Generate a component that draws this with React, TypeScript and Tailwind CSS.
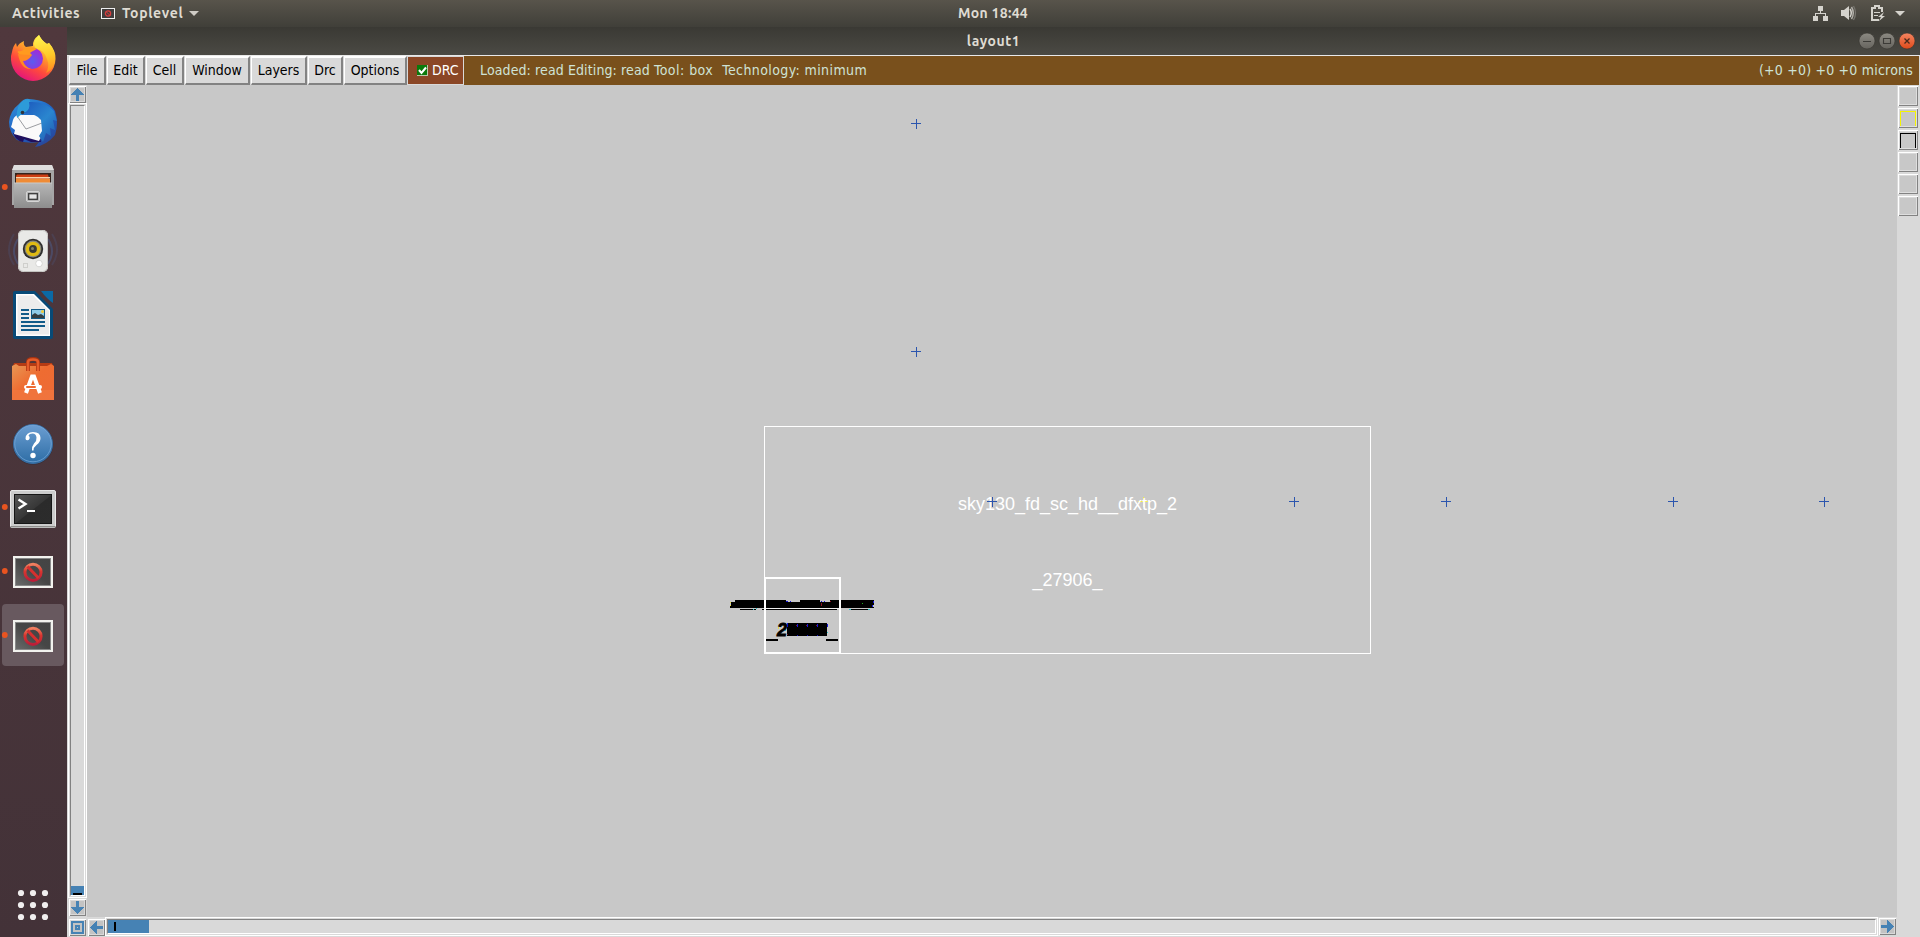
import React from "react";

const menus = [
  { label: "File", box: "w-[37px]" },
  { label: "Edit", box: "w-[38px]" },
  { label: "Cell", box: "w-[38px]" },
  { label: "Window", box: "w-[65px]" },
  { label: "Layers", box: "w-[56px]" },
  { label: "Drc", box: "w-[35px]" },
  { label: "Options", box: "w-[63px]" },
];

const crosses = [
  [916, 123],
  [916, 351],
  [992, 501],
  [1294, 501],
  [1446, 501],
  [1673, 501],
  [1824, 501],
];

function Slot({ children, running = false, active = false }: { children: React.ReactNode; running?: boolean; active?: boolean }) {
  return (
    <svg width="67" height="64" viewBox="0 0 67 64" className="block shrink-0">
      {active && <rect x="2" y="1" width="62" height="62" rx="4" fill="#68595f" />}
      {children}
      {running && <circle cx="4.8" cy="32" r="2.9" fill="#e95420" />}
    </svg>
  );
}

function Firefox() {
  return (
    <Slot>
      <defs>
        <linearGradient id="ffBody" x1="0.8" y1="0.1" x2="0.3" y2="1">
          <stop offset="0" stopColor="#fff44f" />
          <stop offset="0.35" stopColor="#ffa02a" />
          <stop offset="0.65" stopColor="#ff4a3c" />
          <stop offset="1" stopColor="#e3127f" />
        </linearGradient>
        <radialGradient id="ffGlobe" cx="0.5" cy="0.65" r="0.6">
          <stop offset="0" stopColor="#5b5bf0" />
          <stop offset="1" stopColor="#a12bd6" />
        </radialGradient>
        <linearGradient id="ffTail" x1="0.5" y1="0" x2="0.6" y2="1">
          <stop offset="0" stopColor="#fff44f" />
          <stop offset="0.55" stopColor="#ffc928" />
          <stop offset="1" stopColor="#ff8a20" />
        </linearGradient>
      </defs>
      <path d="M12 25 Q13 19 16 16 L17 20 Q19 16 24 14 Q23 18 26 20 L33 19 Q32 13 39 8 Q42 14 47 17 L49 16 Q56 24 55.500 32 A22.500 22.500 0 0 1 33 54 A22.500 22.500 0 0 1 11 33 Q10.500 29 12 25Z" fill="url(#ffBody)" />
      <path d="M39 8 Q41 13 47 17 L49 16 Q56 24 55 34 Q53 43 46 46 Q50 39 47 32 Q44 23 37 22 Q30 17 39 8Z" fill="url(#ffTail)" />
      <circle cx="32.500" cy="31.500" r="10.500" fill="url(#ffGlobe)" />
      <path d="M24 22 Q31 18 37 22 L33 24 Q31 25 30 26 L32 28 Q27 30 26 33 Q23 32 19 27 Q17 25 18 24 Q22 25 24 22Z" fill="#ff9a1f" />
      <path d="M18 27 Q24 28 32 28 Q28 34 23 34 Q25 40 31 42 Q21 43 18 27Z" fill="#ff8a22" />
    </Slot>
  );
}

function Thunderbird() {
  return (
    <Slot>
      <defs>
        <linearGradient id="tbBody" x1="0.2" y1="0" x2="0.8" y2="1">
          <stop offset="0" stopColor="#2f8fd8" />
          <stop offset="0.5" stopColor="#1f5fc4" />
          <stop offset="1" stopColor="#2a4596" />
        </linearGradient>
        <linearGradient id="tbWing" x1="0" y1="0" x2="0.9" y2="1">
          <stop offset="0" stopColor="#1c58bd" />
          <stop offset="0.55" stopColor="#2a86cf" />
          <stop offset="1" stopColor="#1f58b0" />
        </linearGradient>
      </defs>
      <path d="M19 13 Q24 7 29 8 Q49 9 55 20 Q59 32 55 44 Q47 54 35 56 L39 51 Q26 53 17 49 Q9 41 9 31 Q10 20 19 13Z" fill="url(#tbBody)" />
      <path d="M13 42 Q16 50 23 51 L24 48 L31 51 L41 51 L40 47 L24 43Z" fill="#20105e" />
      <path d="M12 33 Q13 25 18 24 L42 24 L42 44 L39 50 L14 43 L15 39 L11 36Z" fill="#fafafa" />
      <path d="M17 25 L26 38 L42 32" fill="none" stroke="#9b9da1" strokeWidth="1" />
      <path d="M29 8 Q22 8 18 16 Q16 22 17 27 Q20 24 24 22 Q30 20 30 14 Q31 10 29 8Z" fill="#2d9bd9" />
      <path d="M29 11 Q46 10 54 20 L57 30 L53 29 L55 39 L50 37 L51 45 L46 42 L43 51 L39 45 L42 40 L41 29 Q37 23 24 22 Q31 19 29 11Z" fill="url(#tbWing)" />
      <circle cx="22.500" cy="21.500" r="1.800" fill="#30333b" />
    </Slot>
  );
}

function Files() {
  return (
    <Slot running>
      <defs>
        <linearGradient id="drawer" x1="0" y1="0" x2="0" y2="1">
          <stop offset="0" stopColor="#b6b6b6" />
          <stop offset="1" stopColor="#8d8d8d" />
        </linearGradient>
      </defs>
      <path d="M14 10 H52 L54 16 V50 H12 V16Z" fill="#a6a6a6" />
      <path d="M14 10 H52 L54 15 H12Z" fill="#dedede" />
      <rect x="15" y="18" width="36" height="10" fill="#35231c" />
      <path d="M17 19.500 H48 L50 27 H16 V21Z" fill="#cf3e12" />
      <rect x="16" y="22" width="34" height="1.500" fill="#f6d3a7" />
      <rect x="16" y="24" width="34" height="4" fill="#ef8b35" />
      <path d="M14 28 H52 V53 H14Z" fill="url(#drawer)" />
      <path d="M14 28 H52" stroke="#cacaca" />
      <rect x="26.500" y="36.500" width="13" height="10" rx="1.500" fill="#b4b4b4" stroke="#d5d5d5" />
      <rect x="28.700" y="38.700" width="8.600" height="5.600" fill="#e6e6e6" stroke="#3b3b3b" strokeWidth="1.300" />
    </Slot>
  );
}

function Speaker() {
  return (
    <Slot>
      <g fill="none" stroke="#4c4a64" strokeWidth="2" transform="translate(0 1)">
        <path d="M14 14 Q4 30 14 45 M52 14 Q62 30 52 45" opacity="0.5" />
        <path d="M18 19 Q10 31 18 44 M48 19 Q56 31 48 44" />
      </g>
      <g transform="translate(0 1)">
        <rect x="18" y="10" width="30" height="42" rx="5" fill="#e9e9e7" />
        <rect x="18.500" y="10.500" width="29" height="41" rx="5" fill="none" stroke="#c3c3c0" />
        <circle cx="33" cy="29" r="10.200" fill="#302f2e" />
        <circle cx="33" cy="29" r="8.400" fill="#87867c" />
        <circle cx="33" cy="29" r="7.300" fill="#dfba13" />
        <circle cx="33" cy="29" r="3.900" fill="#3a3a34" />
        <circle cx="32.500" cy="28.500" r="1.500" fill="#85856a" />
        <circle cx="39" cy="43.500" r="3.300" fill="#fff" stroke="#c9c9c7" strokeWidth="0.700" />
        <rect x="23.500" y="43.500" width="4" height="4" fill="none" stroke="#cfcfcc" />
      </g>
    </Slot>
  );
}

function Writer() {
  return (
    <Slot>
      <path d="M15 8 H35 L53 26 V54 Q53 56 51 56 H15 Q13 56 13 54 V10 Q13 8 15 8Z" fill="#084a77" />
      <path d="M41 8 H53 V20 Q47 16 41 8Z" fill="#0b69a5" />
      <path d="M16 11 H34 L50 27 V53 H16Z" fill="#fff" />
      <path d="M17.500 12.500 H33 L49 28 V51.500 H17.500Z" fill="#ececec" />
      <g fill="#115b89">
        <rect x="21" y="26" width="8" height="2" />
        <rect x="21" y="30" width="8" height="2" />
        <rect x="21" y="34" width="8" height="2" />
        <rect x="21" y="38" width="24" height="2" />
        <rect x="21" y="42" width="24" height="2" />
        <rect x="21" y="46" width="18" height="2" />
        <rect x="31" y="26" width="14" height="10" />
      </g>
      <rect x="32" y="27" width="12" height="8" fill="#8fcbe8" />
      <path d="M32 35 V32 L35 30 L38 32 L41 31 L44 33 V35Z" fill="#343d41" />
      <circle cx="42.500" cy="28.500" r="1.500" fill="#f3ca36" />
    </Slot>
  );
}

function Software() {
  return (
    <Slot>
      <defs>
        <linearGradient id="bag" x1="0" y1="0" x2="1" y2="1">
          <stop offset="0" stopColor="#e89855" />
          <stop offset="0.45" stopColor="#ee6c31" />
          <stop offset="1" stopColor="#ee6a36" />
        </linearGradient>
      </defs>
      <g transform="translate(0 4)">
        <path d="M14 12 H52 L54 17 H12Z" fill="#b53b14" />
        <path d="M12 15 L16 13 L19 15 H47 L51 13 L54 15 V49 H12Z" fill="url(#bag)" />
        <rect x="12" y="39" width="42" height="10" fill="#f17a42" opacity="0.6" />
        <path d="M28 20 V11 Q28 8 33 8 Q38 8 38 11 V20" fill="none" stroke="#a93410" strokeWidth="4" />
        <path d="M28 20 V11 Q28 8.500 33 8.500 Q38 8.500 38 11 V20" fill="none" stroke="#e65c2b" strokeWidth="2.600" />
        <path d="M26 42 L32 25.500 H34 L40 42" fill="none" stroke="#fff" strokeWidth="4" />
        <rect x="24" y="34" width="18" height="4" rx="2" fill="#fff" />
        <rect x="26" y="35" width="10" height="2" rx="1" fill="#ee6a31" />
      </g>
    </Slot>
  );
}

function Help() {
  return (
    <Slot>
      <defs>
        <linearGradient id="help" x1="0" y1="0" x2="0" y2="1">
          <stop offset="0" stopColor="#6c9ed2" />
          <stop offset="1" stopColor="#2d6da5" />
        </linearGradient>
      </defs>
      <circle cx="33" cy="33.500" r="20.200" fill="#3b3039" />
      <circle cx="33" cy="33" r="19.500" fill="url(#help)" stroke="#386da2" />
      <circle cx="33" cy="32.500" r="18.300" fill="none" stroke="#78a8d8" strokeWidth="0.700" />
      <g transform="translate(0 1)" fill="#fff">
        <path d="M25.500 26.500 Q26 20 33 20 Q40.500 20 40.500 26 Q40.500 30 36.500 33 Q33.500 35.300 33.500 38.500 H32 Q31.500 34.500 34 31.500 Q37 28.500 36.500 25.500 Q36 21.500 32.500 21.500 Q29.300 21.500 28.500 23.500 Q30.300 25 29.500 26.800 Q28.500 28.500 27 28.300 Q25.600 28 25.500 26.500Z" />
        <circle cx="33" cy="43.500" r="2.700" />
      </g>
    </Slot>
  );
}

function Terminal() {
  return (
    <Slot running>
      <defs>
        <linearGradient id="term" x1="0" y1="0" x2="1" y2="1">
          <stop offset="0" stopColor="#565656" />
          <stop offset="0.5" stopColor="#373737" />
          <stop offset="0.52" stopColor="#2b2b2b" />
          <stop offset="1" stopColor="#2c2c2c" />
        </linearGradient>
      </defs>
      <rect x="10.500" y="15.500" width="45" height="37" rx="1.500" fill="#cccccc" stroke="#e8e8e8" />
      <rect x="10.500" y="51" width="45" height="1.500" fill="#8e8e8c" />
      <rect x="14.500" y="19.500" width="37" height="29" fill="url(#term)" stroke="#161616" />
      <path d="M18.500 24.500 L25.500 29 L18.500 33.500" fill="none" stroke="#fff" strokeWidth="2.400" />
      <rect x="27" y="35" width="8" height="2" fill="#fff" />
    </Slot>
  );
}

function Blocked({ active = false }: { active?: boolean }) {
  return (
    <Slot running active={active}>
      <defs>
        <linearGradient id="screen" x1="1" y1="0" x2="0" y2="1">
          <stop offset="0" stopColor="#444" />
          <stop offset="0.5" stopColor="#464646" />
          <stop offset="1" stopColor="#6b6b6b" />
        </linearGradient>
        <linearGradient id="sign" x1="0" y1="0" x2="0" y2="1">
          <stop offset="0" stopColor="#f08060" />
          <stop offset="0.45" stopColor="#d93630" />
          <stop offset="1" stopColor="#bb1d38" />
        </linearGradient>
      </defs>
      <rect x="13" y="17" width="40" height="32" fill="#f2f2ee" />
      <rect x="15.500" y="19.500" width="35" height="27" fill="url(#screen)" stroke="#888" strokeWidth="1" />
      <circle cx="33" cy="33.300" r="8.100" fill="none" stroke="url(#sign)" strokeWidth="3" />
      <path d="M27.500 27.500 L38.500 39" stroke="#d6302f" strokeWidth="3" />
    </Slot>
  );
}

function Dock() {
  return (
    <aside className="flex w-[67px] shrink-0 flex-col justify-between bg-linear-to-b from-[#50383d] to-[#433238]">
      <div className="flex flex-col">
        <Firefox />
        <Thunderbird />
        <Files />
        <Speaker />
        <Writer />
        <Software />
        <Help />
        <Terminal />
        <Blocked />
        <Blocked active />
      </div>
      <svg width="67" height="64" viewBox="0 0 67 64" fill="#f0eeee">
        {[20, 32, 44].map((y) => [21, 33, 45].map((x) => <circle key={`${x}-${y}`} cx={x} cy={y} r="3.100" />))}
      </svg>
    </aside>
  );
}

function TopBar() {
  return (
    <header className="grid h-[27px] shrink-0 grid-cols-[957px_72px_1fr] bg-linear-to-b from-[#58544b] to-[#403f39] text-[14px] leading-[27px] font-bold text-[#dfdbd2]">
      <div className="flex pl-3">
        <span className="w-[89px] tracking-[0.6px]">Activities</span>
        <svg width="14" height="11" className="mt-2">
          <rect x="0.500" y="0.500" width="13" height="10" fill="#403e3e" stroke="#eee" />
          <circle cx="7" cy="5.500" r="2.600" fill="none" stroke="#d93e3e" strokeWidth="1.300" />
          <path d="M5 3.500 L9 7.500" stroke="#d93e3e" />
        </svg>
        <span className="ml-[7px] w-[62px] tracking-[0.65px]">Toplevel</span>
        <svg width="10" height="5" className="mt-[11px] ml-[5px]">
          <path d="M0 0 H10 L5 5Z" fill="#cfccc5" />
        </svg>
      </div>
      <div className="text-center tracking-[0.3px] whitespace-nowrap">Mon 18:44</div>
      <div className="flex justify-end">
        <svg width="107" height="27" fill="#d5d3cd">
          <path d="M5 6 h5 v5 h-5Z M0 16 h5 v5 h-5Z M10 16 h5 v5 h-5Z M7 11 h1 v2 h5 v3 h-1 v-2 h-9 v2 h-1 v-3 h5Z" />
          <path d="M28 10 h3 l5 -4 v14 l-5 -4 h-3Z" />
          <path d="M37 9 Q39.500 13 37 17" fill="none" stroke="#d5d3cd" strokeWidth="1.500" />
          <path d="M38.500 7 Q42 13 38.500 19" fill="none" stroke="#b3b1ab" strokeWidth="1.500" />
          <path d="M40.500 6 Q44.500 13 40.500 20" fill="none" stroke="#77756f" strokeWidth="1.300" />
          <path d="M69 12 V8 H66 V6 H62 V8 H59 V20 H66" fill="none" stroke="#d5d3cd" strokeWidth="2" />
          <path d="M61 12 h6 v1 h-6Z M61 15 h4 v1 h-4Z M71 12 l-6 5 h3 l-2 4 l6 -5 h-3Z" />
          <path d="M82 11 H92 L87 16Z" />
        </svg>
      </div>
    </header>
  );
}

function WindowTitle() {
  return (
    <div className="grid h-7 shrink-0 grid-cols-[1fr_auto_1fr] bg-linear-to-b from-[#3a3934] to-[#4b4a44]">
      <span />
      <span className="w-[54px] text-center text-[14px] leading-7 font-bold tracking-[0.55px] text-[#dfdbd2]">layout1</span>
      <div className="flex justify-end">
        <svg width="62" height="28" className="mr-0">
          <defs>
            <linearGradient id="grayKnob" x1="0" y1="0" x2="0" y2="1">
              <stop offset="0" stopColor="#8c8a83" />
              <stop offset="1" stopColor="#66645e" />
            </linearGradient>
            <linearGradient id="redKnob" x1="0" y1="0" x2="0" y2="1">
              <stop offset="0" stopColor="#f58561" />
              <stop offset="1" stopColor="#df4a1a" />
            </linearGradient>
          </defs>
          <g stroke="#35342f" strokeWidth="0.600">
            <circle cx="9" cy="14" r="8" fill="url(#grayKnob)" />
            <circle cx="29" cy="14" r="8" fill="url(#grayKnob)" />
            <circle cx="49" cy="14" r="8" fill="url(#redKnob)" />
          </g>
          <path d="M5 14.500 H13 M25.500 11.500 H32.500 V16.500 H25.500Z" fill="none" stroke="#3c3b37" strokeWidth="1.100" />
          <path d="M46.500 11.500 L51.500 16.500 M51.500 11.500 L46.500 16.500" stroke="#4a2a1c" strokeWidth="1.300" />
        </svg>
      </div>
    </div>
  );
}

function MenuBar() {
  return (
    <nav className="flex h-[30px] shrink-0 border-t border-[#e9e9e9] bg-[#d9d9d9] pl-[2px] text-[14px] leading-[25px] [font-family:'DejaVu_Sans_Condensed','DejaVu_Sans',sans-serif] [font-stretch:condensed]">
      {menus.map((m) => (
        <div key={m.label} className={`${m.box} mr-px h-[29px] shrink-0 border-t-2 border-r-2 border-b-2 border-l border-t-white border-r-[#828282] border-b-[#828282] border-l-white bg-[#d9d9d9] text-center text-black`}>
          {m.label}
        </div>
      ))}
      <div className="flex h-[29px] w-[56px] shrink-0 items-center border border-[#d9d9d9] border-l-0 bg-[#8b4726] text-white">
        <svg width="11" height="11" className="ml-[9px]">
          <rect width="11" height="11" fill="#b9c9a9" />
          <rect width="10" height="10" fill="#0b7a0b" />
          <path d="M2 5 L4.500 8 L9 2.500" fill="none" stroke="#fff" strokeWidth="2" />
        </svg>
        <span className="ml-1">DRC</span>
      </div>
      <div className="mr-px flex grow justify-between bg-[#79501c] pr-[6px] pl-4 leading-[28px] whitespace-pre text-[#cfe3d6]">
        <div className="flex">
          <span className="tracking-[0.11px]">{"Loaded: read Editing: read "}</span>
          <span className="tracking-[0.46px]">{"Tool: box  "}</span>
          <span className="tracking-[0.4px]">Technology: minimum</span>
        </div>
        <span className="tracking-[0.2px]">(+0 +0) +0 +0 microns</span>
      </div>
    </nav>
  );
}

function Knob({ kind }: { kind: "up" | "down" | "left" | "right" | "zoom" }) {
  return (
    <svg width="17" height="17" viewBox="0 0 17 17" shapeRendering="crispEdges" className="block shrink-0">
      <rect width="17" height="17" fill="#fff" />
      <path d="M17 0 V17 H0 L1 16 H16 V1Z" fill="#828282" />
      <rect x="1" y="1" width="15" height="15" fill="#d9d9d9" />
      <rect x="2" y="2" width="13" height="13" fill="#c3c3c3" />
      {kind === "up" && <path d="M8.500 2 L15 9 H10 V15 H7 V9 H2Z" fill="#4682b4" />}
      {kind === "down" && <path d="M8.500 15 L15 8 H10 V2 H7 V8 H2Z" fill="#4682b4" />}
      {kind === "left" && <path d="M2 8.500 L9 2 V7 H15 V10 H9 V15Z" fill="#4682b4" />}
      {kind === "right" && <path d="M15 8.500 L8 2 V7 H2 V10 H8 V15Z" fill="#4682b4" />}
      {kind === "zoom" && (
        <g fill="none" stroke="#4682b4" strokeWidth="2">
          <rect x="3" y="3" width="11" height="11" />
          <rect x="7" y="7" width="3" height="3" />
        </g>
      )}
    </svg>
  );
}

function VerticalScroll() {
  return (
    <div className="flex h-[832px] w-5 shrink-0 flex-col bg-[#d9d9d9] pt-[1px]">
      <div className="flex pl-[2px]">
        <Knob kind="up" />
      </div>
      <div className="ml-px flex h-[795px] w-[19px] border border-white p-px">
        <div className="flex w-[15px] flex-col justify-end border border-t-[#828282] border-r-white border-b-white border-l-[#828282] bg-[#d9d9d9]">
          <div className="flex h-[9px] items-end justify-center bg-[#4682b4]">
            <div className="h-[2px] w-[9px] bg-black" />
          </div>
        </div>
      </div>
      <div className="mt-px flex pl-[2px]">
        <Knob kind="down" />
      </div>
    </div>
  );
}

function HorizontalScroll() {
  return (
    <div className="flex h-5 w-full bg-[#d9d9d9] pl-[2px]">
      <div className="mt-[2px] mr-[2px]">
        <Knob kind="zoom" />
      </div>
      <div className="mt-[2px]">
        <Knob kind="left" />
      </div>
      <div className="h-[19px] w-[1773px] border border-white p-px">
        <div className="h-[15px] border border-t-[#828282] border-r-white border-b-white border-l-[#828282]">
          <div className="flex h-[13px] w-[41px] bg-[#4682b4] pt-[2px] pl-[6px]">
            <div className="h-[9px] w-[2px] bg-black" />
          </div>
        </div>
      </div>
      <div className="mt-px ml-px">
        <Knob kind="right" />
      </div>
    </div>
  );
}

function LayoutCanvas() {
  return (
    <svg width="1810" height="832" viewBox="87 85 1810 832" className="block shrink-0 bg-[#c8c8c8]" fontFamily="'Liberation Sans', Arial, sans-serif">
      <rect x="764.500" y="426.500" width="606" height="227" fill="none" stroke="#fff" />
      <path d="M1138 501.500 H1148 M1143.500 497 V507" stroke="#f2ee3a" />
      <g fill="#fff" fontSize="18" textAnchor="middle">
        <text x="1067.500" y="510">sky130_fd_sc_hd__dfxtp_2</text>
        <text x="1067.500" y="586">_27906_</text>
      </g>
      <path d={crosses.map(([x, y]) => `M${x - 5} ${y + 0.5}h10M${x + 0.5} ${y - 4}v10`).join("")} stroke="#2b55ae" fill="none" />
      <g shapeRendering="crispEdges">
        <path d="M735 600 H786 V602 H800 V600 H820 V602 H830 V600 H874 V604 L872 607 H874 V608 H730 V606 L731 604 L730 602 H735Z" />
        <rect x="740" y="609" width="16" height="1" />
        <rect x="849" y="609" width="20" height="1" />
        <rect x="787" y="623" width="40" height="13" />
        <rect x="766" y="639" width="12" height="2" />
        <rect x="826" y="639" width="12" height="2" />
        <path d="M786 601h2M790 601h1M821 601h1M824 601h1M797 624v3M807 624v3M817 624v3M787 623v4M873 601v2M872 605v2M827 624v3M797 635h1M807 635h1M817 635h1" stroke="#1515dd" />
        <path d="M830 601h1M821 603v3M780 624h2M796 625h1M806 625h1M816 625h1M787 634h1" stroke="#8a1020" />
        <path d="M730 602v1M730 605v1M778 627v2M778 634h2" stroke="#e5dc3b" />
        <path d="M753 609h1M756 608h1M849 609h2M868 609h2M785 629v2M827 632h1" stroke="#29c4cb" />
        <path d="M862 603h1M780 626h1" stroke="#1bb51b" />
        <rect x="762" y="609" width="75" height="1" fill="#000" />
        <rect x="765" y="608" width="74" height="1" fill="#eee" />
      </g>
      <text x="777" y="636" fontSize="18" fontWeight="700" fontStyle="italic" stroke="#000" strokeWidth="0.800">2</text>
      <path d="M765 578 H840 V653 H765Z" fill="none" stroke="#fff" strokeWidth="2" />
    </svg>
  );
}

function Palette() {
  const tints = ["none", "#f5f500", "#000000", "none", "none", "none"];
  return (
    <div className="flex w-[23px] shrink-0 flex-col gap-[2px] bg-[#d9d9d9] pt-px pl-px">
      {tints.map((tint, i) => (
        <svg key={i} width="20" height="20" shapeRendering="crispEdges" className="block">
          <rect width="20" height="20" fill="#fff" />
          <path d="M20 0 V20 H0 L1 19 H19 V1Z" fill="#828282" />
          <rect x="1" y="1" width="18" height="18" fill="#d9d9d9" />
          <rect x="2" y="2" width="16" height="16" fill="#c8c8c8" />
          <path d="M2.500 18 V3.500 H17.500 V18" fill="none" stroke={tint} />
          <path d="M2 18.500 H18 M18.500 2 V19" stroke="#dedede" />
        </svg>
      ))}
    </div>
  );
}

export default function App() {
  return (
    <div className="flex h-[937px] w-[1920px] flex-col overflow-hidden bg-[#d9d9d9] [font-family:Ubuntu,'Noto_Sans',sans-serif]">
      <TopBar />
      <div className="flex min-h-0 grow">
        <Dock />
        <main className="flex w-[1853px] flex-col">
          <WindowTitle />
          <MenuBar />
          <div className="flex min-h-0 grow">
            <div className="flex w-[1830px] flex-col">
              <div className="flex">
                <VerticalScroll />
                <LayoutCanvas />
              </div>
              <HorizontalScroll />
            </div>
            <Palette />
          </div>
        </main>
      </div>
    </div>
  );
}
